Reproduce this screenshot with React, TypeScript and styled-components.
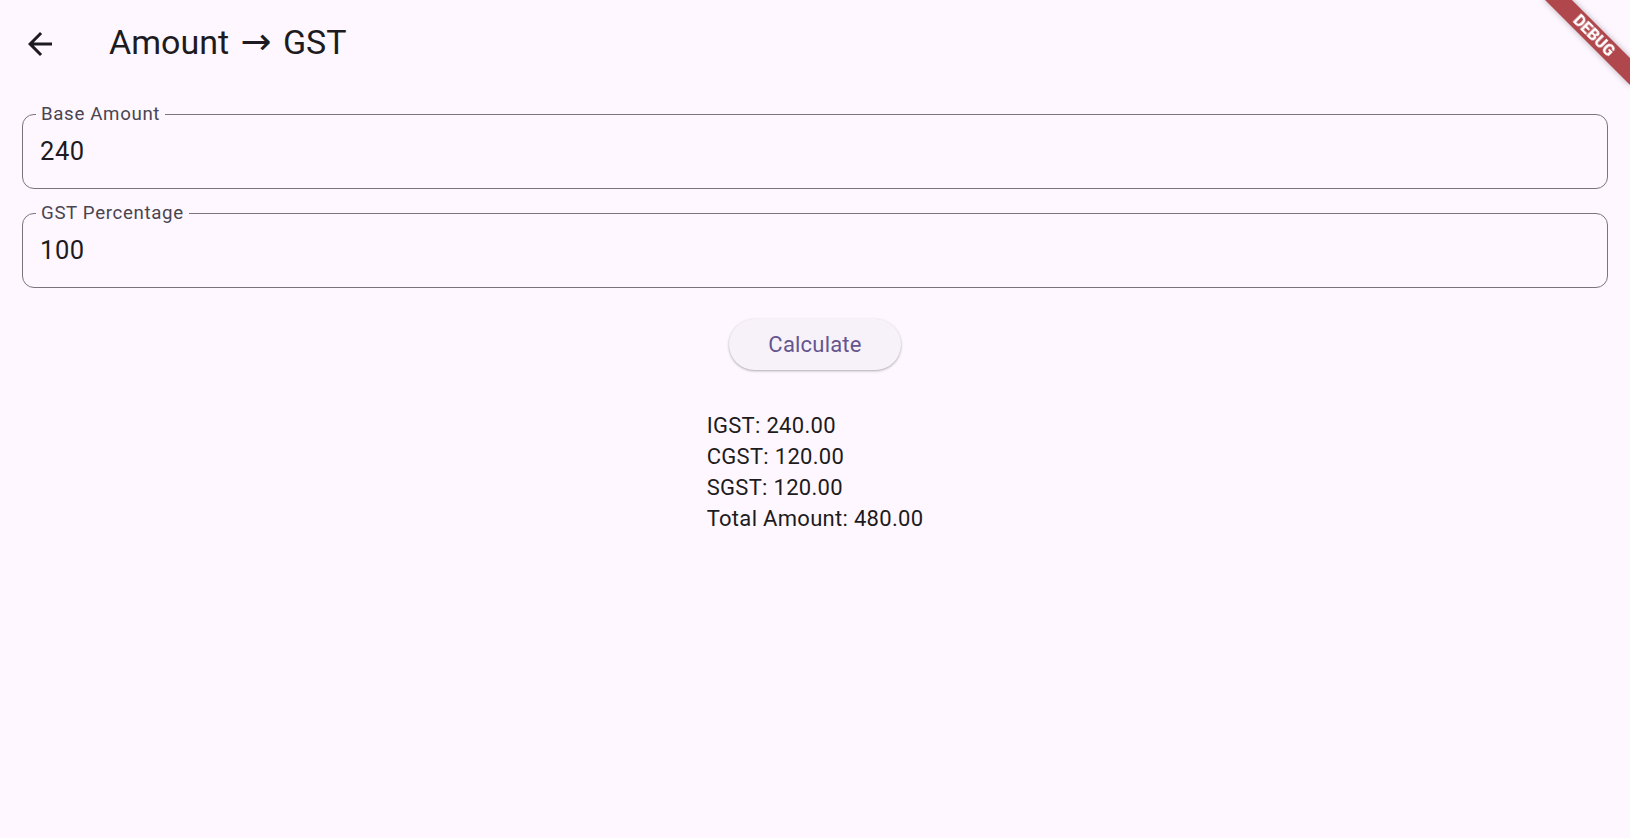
import React, { useState } from "react";
import styled, { createGlobalStyle } from "styled-components";

const GlobalStyle = createGlobalStyle`
  html, body {
    margin: 0;
    padding: 0;
    height: 100%;
    overflow: hidden;
    background: #fef7ff;
  }
  body {
    font-family: Roboto, "Noto Sans", "DejaVu Sans", sans-serif;
    color: #1d1b20;
  }
`;

const Page = styled.div`
  min-height: 100vh;
  background: #fef7ff;
`;

const AppBar = styled.header`
  height: 84px;
  display: flex;
  align-items: center;
  padding-left: 22px;
  gap: 51px;
`;

const BackButton = styled.button`
  width: 36px;
  height: 36px;
  margin-top: 4px;
  padding: 0;
  border: none;
  background: transparent;
  color: #1d1b20;
  display: flex;
  align-items: center;
  justify-content: center;
  cursor: pointer;
`;

const Title = styled.h1`
  margin: 0;
  font-size: 34px;
  font-weight: 400;
  line-height: 40px;
  color: #1d1b20;
`;

const TitleArrow = styled.span`
  font-family: "DejaVu Sans", sans-serif;
  font-size: 37px;
  line-height: 0;
  margin: 0 3px;
`;

const Form = styled.main`
  display: flex;
  flex-direction: column;
  padding: 30px 22px 0;
  gap: 24px;
`;

const Field = styled.label`
  position: relative;
  display: flex;
  align-items: center;
  height: 75px;
  box-sizing: border-box;
  border: 1px solid #79747e;
  border-radius: 12px;
  padding: 0 17px 2px;
`;

const FieldLabel = styled.span`
  position: absolute;
  top: -12px;
  left: 13px;
  padding: 0 5px;
  background: #fef7ff;
  font-size: 18.7px;
  line-height: 22px;
  letter-spacing: 0.65px;
  color: #49454f;
`;

const Input = styled.input`
  flex: 1;
  border: none;
  outline: none;
  background: transparent;
  padding: 0;
  font-family: Roboto, "Noto Sans", sans-serif;
  font-size: 25.5px;
  line-height: 32px;
  letter-spacing: 0.6px;
  color: #1d1b20;
`;

const CalcButton = styled.button`
  align-self: center;
  margin-top: 7px;
  height: 51px;
  padding: 0 39px;
  border: none;
  border-radius: 26px;
  background: #f7f2fa;
  box-shadow: 0 1px 3px rgba(0, 0, 0, 0.22), 0 1px 2px rgba(0, 0, 0, 0.12);
  font-family: Roboto, "Noto Sans", sans-serif;
  font-size: 22px;
  font-weight: 400;
  letter-spacing: 0.2px;
  color: #65558f;
  cursor: pointer;
`;

const Results = styled.div`
  align-self: center;
  margin-top: 16px;
  display: flex;
  flex-direction: column;
`;

const ResultLine = styled.div`
  font-size: 22px;
  line-height: 31px;
  letter-spacing: 0.3px;
  color: #1d1b20;
`;

const DebugBanner = styled.div`
  position: fixed;
  top: 26px;
  right: -25px;
  width: 122px;
  height: 19px;
  transform: rotate(45deg);
  background: #b0474d;
  box-shadow: 0 0 6px rgba(0, 0, 0, 0.28);
  color: #fff;
  font-family: Roboto, "Liberation Sans", sans-serif;
  font-weight: 900;
  font-size: 16px;
  line-height: 19px;
  text-align: center;
  pointer-events: none;
`;

function ArrowBack() {
  return (
    <svg width="36" height="36" viewBox="0 0 24 24" fill="currentColor">
      <path d="M20 11H7.83l5.59-5.59L12 4l-8 8 8 8 1.41-1.41L7.83 13H20v-2z" />
    </svg>
  );
}

export default function App() {
  const [base, setBase] = useState("240");
  const [pct, setPct] = useState("100");

  const b = parseFloat(base) || 0;
  const p = parseFloat(pct) || 0;
  const igst = (b * p) / 100;

  return (
    <Page>
      <GlobalStyle />
      <AppBar>
        <BackButton aria-label="Back">
          <ArrowBack />
        </BackButton>
        <Title>
          Amount <TitleArrow>→</TitleArrow> GST
        </Title>
      </AppBar>
      <Form>
        <Field>
          <FieldLabel>Base Amount</FieldLabel>
          <Input value={base} onChange={(e) => setBase(e.target.value)} />
        </Field>
        <Field>
          <FieldLabel>GST Percentage</FieldLabel>
          <Input value={pct} onChange={(e) => setPct(e.target.value)} />
        </Field>
        <CalcButton>Calculate</CalcButton>
        <Results>
          <ResultLine>IGST: {igst.toFixed(2)}</ResultLine>
          <ResultLine>CGST: {(igst / 2).toFixed(2)}</ResultLine>
          <ResultLine>SGST: {(igst / 2).toFixed(2)}</ResultLine>
          <ResultLine>Total Amount: {(b + igst).toFixed(2)}</ResultLine>
        </Results>
      </Form>
      <DebugBanner>DEBUG</DebugBanner>
    </Page>
  );
}
